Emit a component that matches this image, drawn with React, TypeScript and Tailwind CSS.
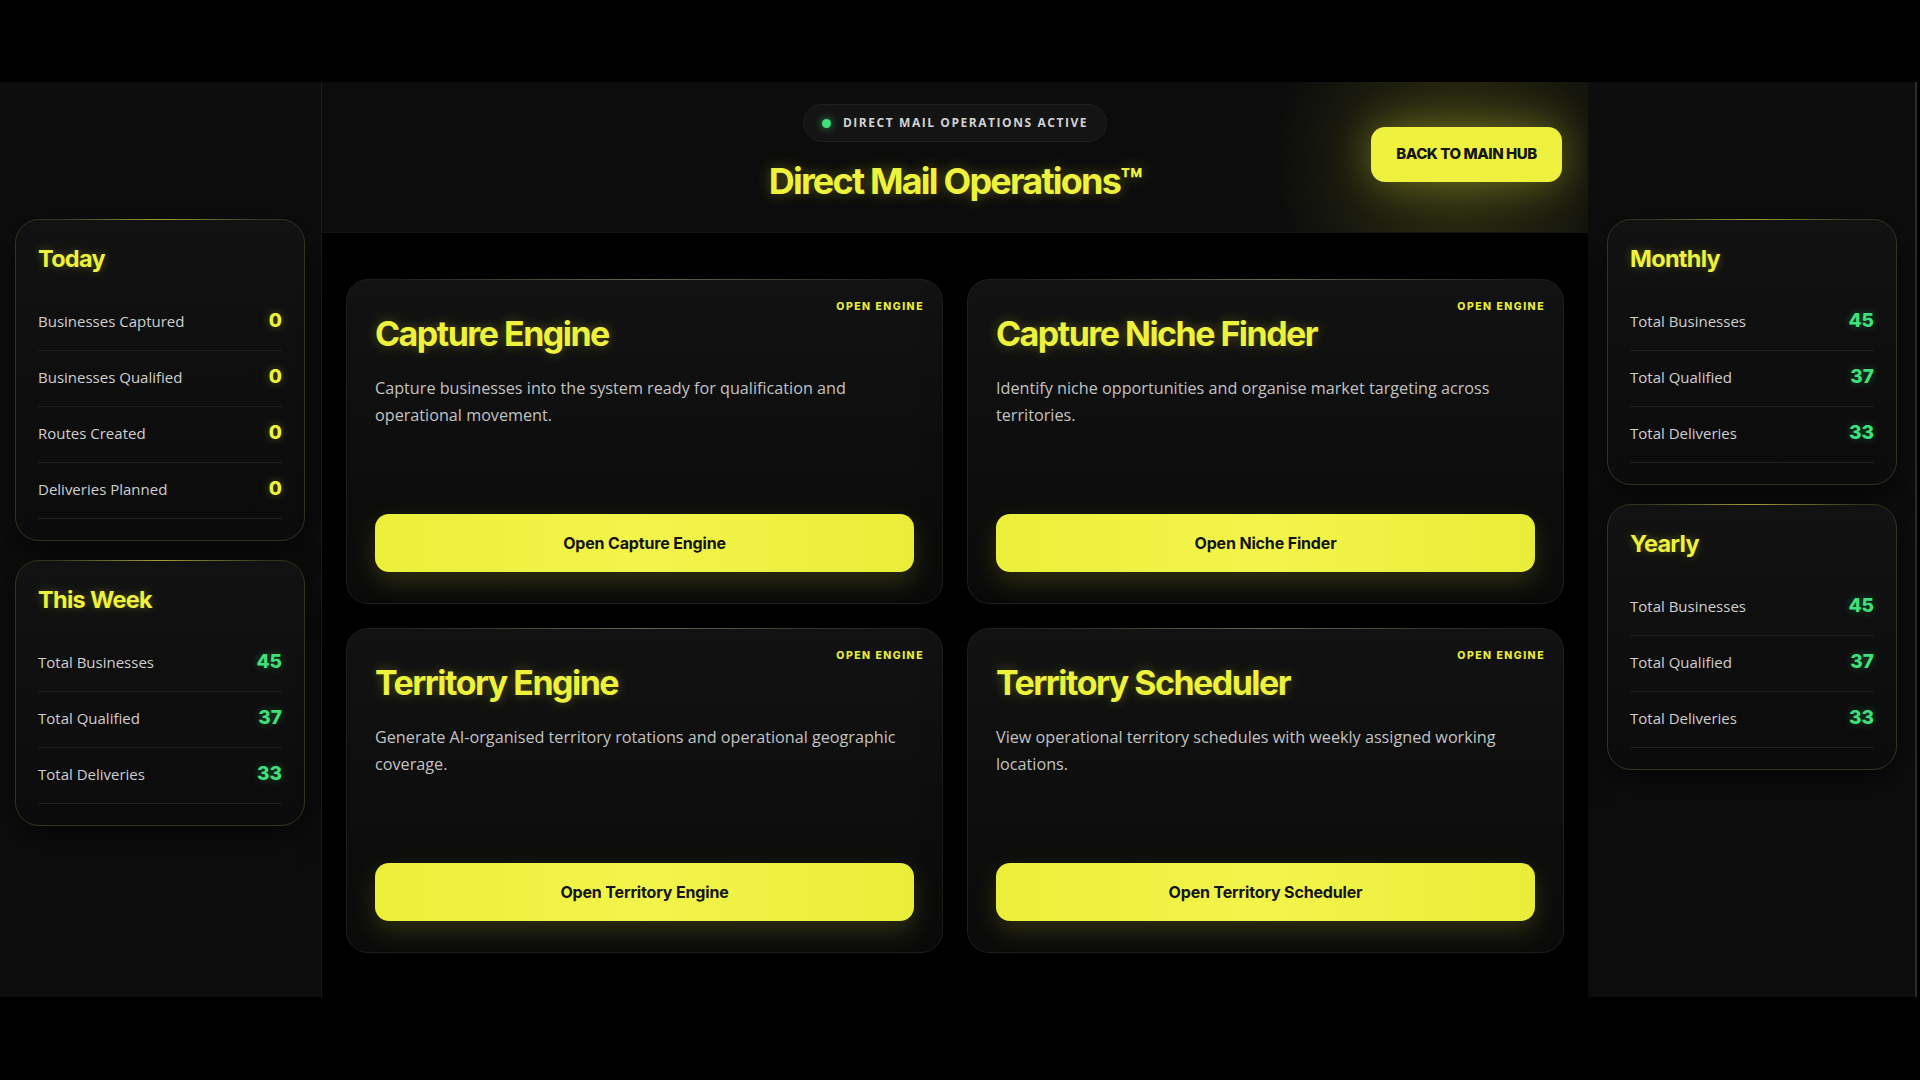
import React from 'react'

const HEAD = { fontFamily: 'Inter, "Noto Sans", sans-serif' }
const BODY = { fontFamily: '"Open Sans", "Noto Sans", sans-serif' }

type Row = { label: string; value: number }

function StatCard({ title, rows, tone }: { title: string; rows: Row[]; tone: 'yellow' | 'green' }) {
  return (
    <div className="relative w-[290px] rounded-[24px] border border-[#34331f] bg-gradient-to-b from-[#121212] to-[#0b0b0b] px-[22px] pt-[25px] pb-[21px] shadow-[0_10px_30px_rgba(0,0,0,0.6)]">
      <div className="absolute top-[-1px] left-10 right-10 h-px bg-gradient-to-r from-transparent via-[#e8e84a]/60 to-transparent" />
      <h3
        style={HEAD}
        className="text-[23.5px] leading-[28px] font-bold tracking-[-0.03em] text-[#eef23a] [text-shadow:0_0_10px_rgba(238,242,58,0.3)]"
      >
        {title}
      </h3>
      <div className="mt-[22px]">
        {rows.map((r) => (
          <div key={r.label} className="flex h-[56px] items-center justify-between border-b border-[#1f1f1c] pb-[3px]">
            <span style={BODY} className="text-[15px] text-[#cfcfcf]">
              {r.label}
            </span>
            <span
              style={HEAD}
              className={`text-[19px] font-extrabold ${
                tone === 'yellow'
                  ? 'text-[#eef23a] [text-shadow:0_0_8px_rgba(238,242,58,0.35)]'
                  : 'text-[#3fe07c] [text-shadow:0_0_8px_rgba(63,224,124,0.35)]'
              }`}
            >
              {r.value}
            </span>
          </div>
        ))}
      </div>
    </div>
  )
}

function EngineCard({ title, desc, action }: { title: string; desc: string; action: string }) {
  return (
    <div className="relative flex h-[325px] flex-col rounded-[22px] border border-[#1e1e1e] bg-gradient-to-b from-[#121212] to-[#0a0a0a] px-7 pt-[34px] pb-[31px] shadow-[0_12px_40px_rgba(0,0,0,0.8)]">
      <div className="absolute top-[-1px] left-12 right-12 h-px bg-gradient-to-r from-transparent via-[#d8d890]/40 to-transparent" />
      <span
        style={HEAD}
        className="absolute top-[19px] right-[18px] text-[10.5px] font-extrabold tracking-[0.14em] text-[#e6ea3a]"
      >
        OPEN ENGINE
      </span>
      <h2
        style={HEAD}
        className="text-[34px] leading-[40px] font-bold tracking-[-0.045em] text-[#eef23a] [text-shadow:0_0_12px_rgba(238,242,58,0.3)]"
      >
        {title}
      </h2>
      <p style={BODY} className="mt-[21px] text-[16.2px] leading-[27px] text-[#c2c2c2]">
        {desc}
      </p>
      <button
        style={HEAD}
        className="mt-auto h-[58px] w-full rounded-[14px] bg-gradient-to-r from-[#ecef3a] via-[#f2f44a] to-[#eaed38] text-[16px] font-bold tracking-[-0.01em] text-[#141414] shadow-[0_10px_26px_rgba(238,240,62,0.16)]"
      >
        {action}
      </button>
    </div>
  )
}

const today: Row[] = [
  { label: 'Businesses Captured', value: 0 },
  { label: 'Businesses Qualified', value: 0 },
  { label: 'Routes Created', value: 0 },
  { label: 'Deliveries Planned', value: 0 },
]

const totals: Row[] = [
  { label: 'Total Businesses', value: 45 },
  { label: 'Total Qualified', value: 37 },
  { label: 'Total Deliveries', value: 33 },
]

const engines = [
  {
    title: 'Capture Engine',
    desc: 'Capture businesses into the system ready for qualification and operational movement.',
    action: 'Open Capture Engine',
  },
  {
    title: 'Capture Niche Finder',
    desc: 'Identify niche opportunities and organise market targeting across territories.',
    action: 'Open Niche Finder',
  },
  {
    title: 'Territory Engine',
    desc: 'Generate AI-organised territory rotations and operational geographic coverage.',
    action: 'Open Territory Engine',
  },
  {
    title: 'Territory Scheduler',
    desc: 'View operational territory schedules with weekly assigned working locations.',
    action: 'Open Territory Scheduler',
  },
]

export default function App() {
  return (
    <div className="h-[1080px] w-[1920px] overflow-hidden bg-black pt-[82px]">
      <div className="flex h-[915px] w-[1917px] border-r-2 border-[#2c2c2c]">
        {/* Left stats */}
        <aside className="flex w-[322px] shrink-0 flex-col gap-[19px] border-r border-[#1c1c1c] bg-[#0d0d0d] pt-[137px] pl-[15px]">
          <StatCard title="Today" rows={today} tone="yellow" />
          <StatCard title="This Week" rows={totals} tone="green" />
        </aside>

        {/* Main */}
        <main className="flex flex-1 flex-col bg-black">
          <header className="relative flex h-[151px] flex-col items-center overflow-hidden border-b border-[#151515] bg-[#0c0c0c] pt-[22px]">
            <div className="absolute right-[-80px] top-[-110px] h-[380px] w-[420px] rounded-full bg-[radial-gradient(circle,rgba(210,215,40,0.2),transparent_65%)]" />
            <div className="flex h-[38px] items-center gap-[12px] rounded-full border border-[#1f1f1f] bg-[#141414] pl-[18px] pr-[18px]">
              <span className="h-[9px] w-[9px] rounded-full bg-[#3fe07c] shadow-[0_0_8px_rgba(63,224,124,0.7)]" />
              <span style={BODY} className="text-[12px] font-bold tracking-[0.13em] text-[#d2d2d2]">
                DIRECT MAIL OPERATIONS ACTIVE
              </span>
            </div>
            <h1
              style={HEAD}
              className="mt-[17px] text-[36px] leading-[44px] font-bold tracking-[-0.05em] text-[#eef23a] [text-shadow:0_0_14px_rgba(238,242,58,0.35)]"
            >
              Direct Mail Operations™
            </h1>
            <button
              style={HEAD}
              className="absolute right-[26px] top-[45px] h-[55px] w-[191px] rounded-[14px] bg-[#eef23e] text-[15px] font-extrabold tracking-[-0.03em] text-[#151515] shadow-[0_0_40px_rgba(238,242,62,0.35)]"
            >
              BACK TO MAIN HUB
            </button>
          </header>

          <div className="grid grid-cols-2 gap-6 px-6 pt-[46px]">
            {engines.map((e) => (
              <EngineCard key={e.title} {...e} />
            ))}
          </div>
        </main>

        {/* Right stats */}
        <aside className="flex w-[327px] shrink-0 flex-col gap-[19px] bg-[#0d0d0d] pt-[137px] pl-[19px]">
          <StatCard title="Monthly" rows={totals} tone="green" />
          <StatCard title="Yearly" rows={totals} tone="green" />
        </aside>
      </div>
    </div>
  )
}
